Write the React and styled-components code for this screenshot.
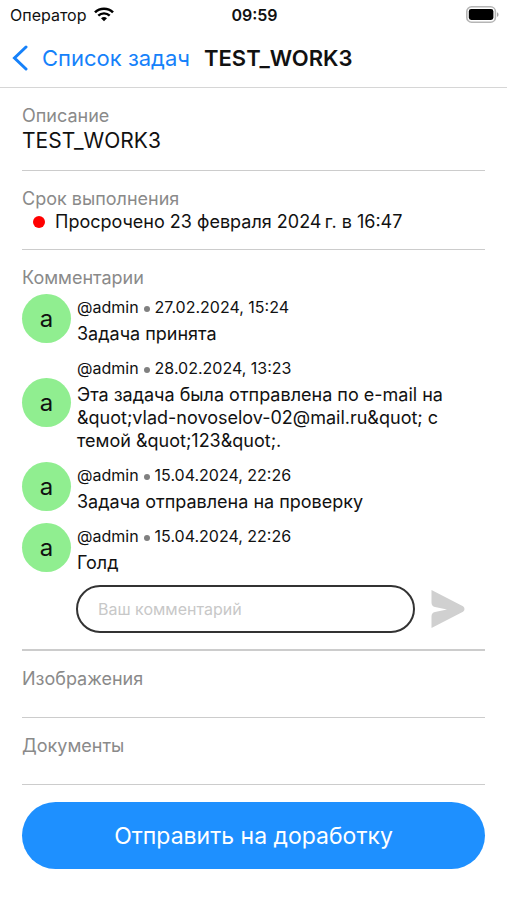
import React, { useState } from 'react'
import styled, { createGlobalStyle } from 'styled-components'

const comments = [
  { id: 1, author: '@admin', date: '27.02.2024, 15:24', text: 'Задача принята' },
  {
    id: 2,
    author: '@admin',
    date: '28.02.2024, 13:23',
    text: 'Эта задача была отправлена по e-mail на &quot;vlad-novoselov-02@mail.ru&quot; с темой &quot;123&quot;.',
  },
  { id: 3, author: '@admin', date: '15.04.2024, 22:26', text: 'Задача отправлена на проверку' },
  { id: 4, author: '@admin', date: '15.04.2024, 22:26', text: 'Голд' },
]

function StatusBar() {
  return (
    <StatusRow>
      <Carrier>
        Оператор
        <svg width="20" height="15" viewBox="0 0 20 15" aria-hidden="true">
          <path d="M1 5.400a12.800 12.800 0 0 1 18 0" fill="none" stroke="#000" strokeWidth="2.600" />
          <path d="M4.300 8.700a8.200 8.200 0 0 1 11.400 0" fill="none" stroke="#000" strokeWidth="2.400" />
          <path d="M10 14.300l-3-3a4.400 4.400 0 0 1 6 0z" fill="#000" />
        </svg>
      </Carrier>
      <Clock>09:59</Clock>
      <Battery>
        <svg width="33" height="17" viewBox="0 0 33 17" aria-hidden="true">
          <rect x="0.8" y="0.8" width="28.600" height="15.400" rx="4.800" fill="none" stroke="#b5b5b5" strokeWidth="1.600" />
          <rect x="2.800" y="3" width="24.600" height="11" rx="2.400" fill="#000" />
          <path d="M31 6.200c2 .8 2 3.800 0 4.600z" fill="#a5a5a5" />
        </svg>
      </Battery>
    </StatusRow>
  )
}

function Comment({ author, date, text }) {
  return (
    <CommentItem>
      <Avatar>a</Avatar>
      <CommentBody>
        <Meta>
          {author}
          <Dot />
          {date}
        </Meta>
        <CommentText>{text}</CommentText>
      </CommentBody>
    </CommentItem>
  )
}

export default function App() {
  const [comment, setComment] = useState('')

  const handleSubmit = (e) => {
    e.preventDefault()
    setComment('')
  }

  return (
    <>
      <GlobalStyle />
      <StatusBar />
      <NavBar>
        <BackLink href="#tasks">
          <svg width="16" height="26" viewBox="0 0 16 26" aria-hidden="true">
            <path d="M14 2L2.500 13l11.500 11" fill="none" stroke="#1581fa" strokeWidth="3" strokeLinecap="round" />
          </svg>
          Список задач
        </BackLink>
        <NavTitle>TEST_WORK3</NavTitle>
      </NavBar>
      <Content>
        <Section>
          <Label>Описание</Label>
          <Value>TEST_WORK3</Value>
        </Section>
        <Section>
          <Label>Срок выполнения</Label>
          <Deadline>
            <RedDot />
            {'Просрочено 23 февраля 2024\u202fг. в 16:47'}
          </Deadline>
        </Section>
        <CommentsSection>
          <Label>Комментарии</Label>
          <CommentList>
            {comments.map((c) => (
              <Comment key={c.id} {...c} />
            ))}
          </CommentList>
          <CommentForm onSubmit={handleSubmit}>
            <CommentInput
              aria-label="Ваш комментарий"
              placeholder="Ваш комментарий"
              value={comment}
              onChange={(e) => setComment(e.target.value)}
            />
            <SendButton type="submit" aria-label="Отправить">
              <svg width="34" height="38" viewBox="0 0 34 38" aria-hidden="true">
                <path d="M0.500 0L32 16.200Q33.500 17.200 33.500 19T32 21.800L0.500 38V26.500Q0.500 22.800 4 22L16 19.500L4 17Q0.500 16.200 0.500 12.500z" fill="#d0d0d0" />
              </svg>
            </SendButton>
          </CommentForm>
        </CommentsSection>
        <EmptySection>
          <Label>Изображения</Label>
        </EmptySection>
        <EmptySection>
          <Label>Документы</Label>
        </EmptySection>
        <ReworkButton type="button">Отправить на доработку</ReworkButton>
      </Content>
    </>
  )
}

const GlobalStyle = createGlobalStyle`
  * {
    box-sizing: border-box;
  }

  body {
    margin: 0;
    background: #fff;
    color: #111;
    font-family: Inter, 'Liberation Sans', sans-serif;
  }

  h1, h2, p, ul {
    margin: 0;
    padding: 0;
    font-weight: 400;
  }
`

const StatusRow = styled.div`
  display: grid;
  grid-template-columns: 1fr auto 1fr;
  align-items: center;
  height: 29px;
  padding: 0 8px 0 10px;
  font-size: 16px;
`

const Carrier = styled.div`
  display: flex;
  align-items: center;
  gap: 8px;
`

const Clock = styled.div`
  font-weight: 600;
`

const Battery = styled.div`
  display: flex;
  justify-content: flex-end;
`

const NavBar = styled.header`
  display: flex;
  align-items: center;
  gap: 14px;
  height: 59px;
  padding: 0 12px;
  border-bottom: 1px solid #d6d6d6;
`

const BackLink = styled.a`
  display: flex;
  align-items: center;
  gap: 14px;
  color: #1581fa;
  font-size: 22px;
  text-decoration: none;
`

const NavTitle = styled.h1`
  && {
    font-size: 22px;
    font-weight: 600;
  }
`

const Content = styled.main`
  padding: 0 22px;
`

const Section = styled.section`
  padding: 16px 0;
  border-bottom: 1px solid #ccc;
`

const CommentsSection = styled(Section)`
  border-bottom-width: 2px;
`

const EmptySection = styled(Section)`
  padding-bottom: 26px;
`

const Label = styled.h2`
  color: #8a8a8a;
  font-size: 18px;
  line-height: 24px;
`

const Value = styled.p`
  font-size: 21px;
  line-height: 26px;
`

const Deadline = styled.p`
  display: flex;
  align-items: center;
  gap: 10px;
  padding-left: 11px;
  font-size: 18px;
  line-height: 22px;
`

const RedDot = styled.span`
  width: 12px;
  height: 12px;
  border-radius: 50%;
  background: #f00;
`

const CommentList = styled.ul`
  && {
    display: flex;
    flex-direction: column;
    gap: 8px;
    margin-top: 2px;
    list-style: none;
  }
`

const CommentItem = styled.li`
  display: flex;
  align-items: center;
  gap: 6px;
`

const Avatar = styled.div`
  display: flex;
  flex-shrink: 0;
  align-items: center;
  justify-content: center;
  width: 49px;
  height: 49px;
  border-radius: 50%;
  background: #90ee90;
  font-size: 24px;
`

const CommentBody = styled.div`
  flex: 1;
`

const Meta = styled.p`
  display: flex;
  align-items: center;
  gap: 5px;
  font-size: 16px;
  line-height: 30px;
`

const Dot = styled.span`
  width: 6px;
  height: 6px;
  margin-top: 3px;
  border-radius: 50%;
  background: #808080;
`

const CommentText = styled.p`
  font-size: 18px;
  line-height: 23px;
`

const CommentForm = styled.form`
  display: flex;
  align-items: center;
  gap: 16px;
  margin-top: 11px;
  padding: 0 20px 0 54px;
`

const CommentInput = styled.input`
  flex: 1;
  min-width: 0;
  height: 48px;
  padding: 0 20px;
  border: 2px solid #333;
  border-radius: 24px;
  font-family: inherit;
  font-size: 16px;

  &::placeholder {
    color: #c8c8c8;
  }
`

const SendButton = styled.button`
  display: flex;
  padding: 0;
  border: none;
  background: none;
`

const ReworkButton = styled.button`
  width: 100%;
  height: 67px;
  margin: 17px 0;
  border: none;
  border-radius: 34px;
  background: #1e90ff;
  color: #fff;
  font-family: inherit;
  font-size: 23px;
`
